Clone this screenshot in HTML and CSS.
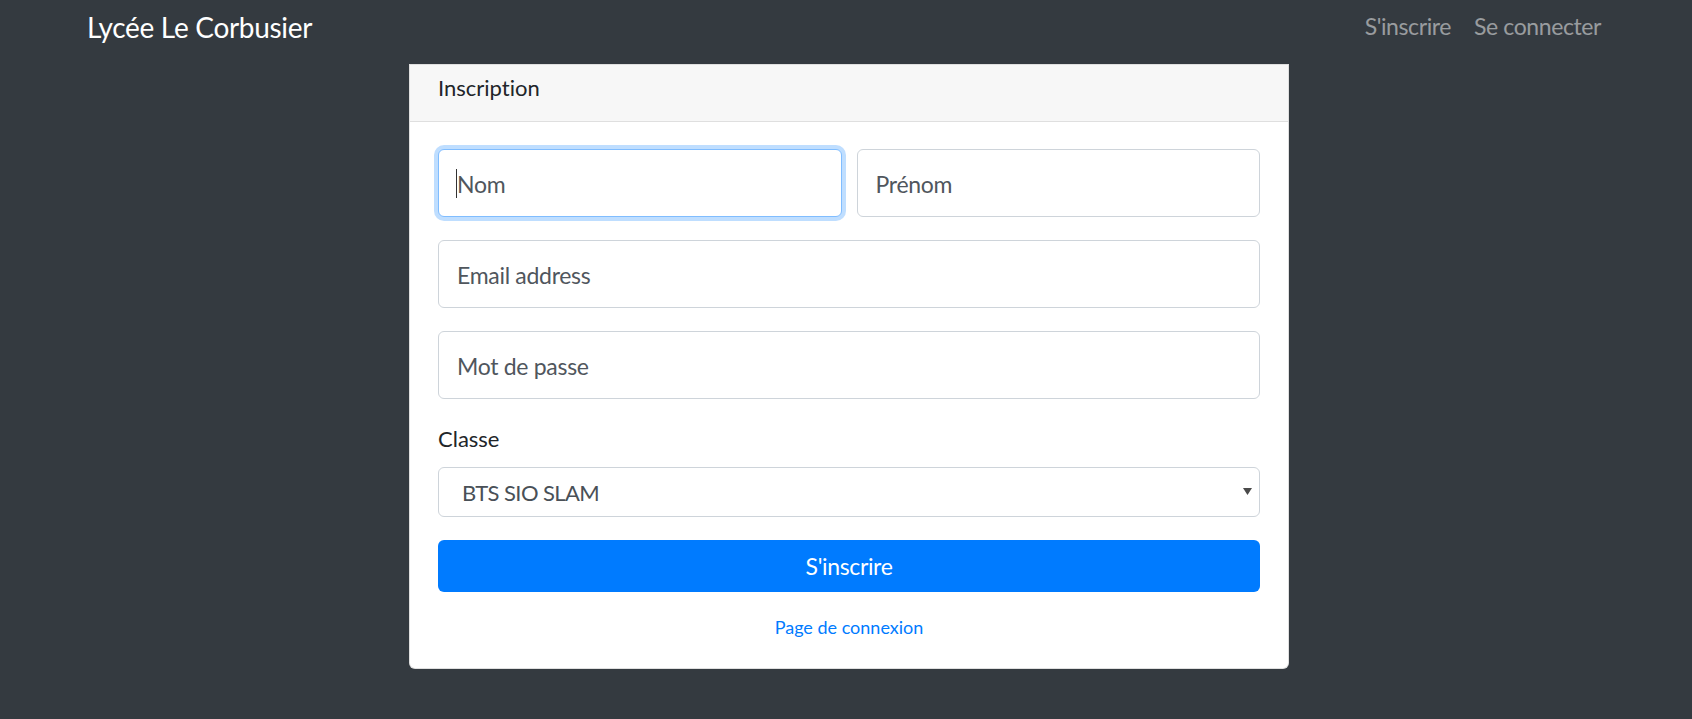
FILE: index.html
```html
<!DOCTYPE html>
<html lang="fr">
<head>
<meta charset="utf-8">
<title>Inscription - Lycée Le Corbusier</title>
<link rel="stylesheet" href="styles.css">
</head>
<body>
<header class="navbar">
  <a class="brand" href="#">Lycée Le Corbusier</a>
  <nav class="nav">
    <a class="nav-link" href="#">S'inscrire</a>
    <a class="nav-link" href="#">Se connecter</a>
  </nav>
</header>
<main class="page">
  <section class="card">
    <div class="card-header">Inscription</div>
    <form class="card-body">
      <div class="row row-two">
        <div class="field-wrap">
          <input class="field is-focus" type="text" placeholder="Nom">
          <span class="caret"></span>
        </div>
        <input class="field" type="text" placeholder="Prénom">
      </div>
      <div class="row">
        <input class="field" type="email" placeholder="Email address">
      </div>
      <div class="row">
        <input class="field" type="password" placeholder="Mot de passe">
      </div>
      <div class="group">
        <label class="label">Classe</label>
        <div class="select-wrap">
          <select class="select"><option>BTS SIO SLAM</option></select>
          <svg class="select-arrow" width="9" height="7" viewBox="0 0 9 7"><path d="M0 0H9L4.5 7Z" fill="#4a4a4a"/></svg>
        </div>
      </div>
      <button class="btn" type="button">S'inscrire</button>
      <div class="footer-link"><a href="#">Page de connexion</a></div>
    </form>
  </section>
</main>
</body>
</html>
```
FILE: styles.css
```css
* { box-sizing: border-box; }

html, body {
  margin: 0;
  padding: 0;
}

body {
  background: #343a40;
  font-family: Lato, "Open Sans", sans-serif;
  font-variant-ligatures: none;
  min-height: 100vh;
}

.navbar {
  height: 64px;
  display: flex;
  justify-content: space-between;
  align-items: flex-start;
  padding: 0 91px 0 87px;
}

.brand {
  margin-top: 12px;
  font-size: 28px;
  letter-spacing: -0.3px;
  line-height: 30px;
  color: #fff;
  text-decoration: none;
}

.nav {
  display: flex;
  gap: 23px;
  margin-top: 14px;
}

.nav-link {
  font-size: 23px;
  letter-spacing: -0.4px;
  line-height: 24px;
  color: rgba(255, 255, 255, 0.5);
  text-decoration: none;
}

.page {
  padding-left: 409px;
}

.card {
  width: 880px;
  background: #fff;
  border: 1px solid rgba(0, 0, 0, 0.125);
  border-radius: 0 0 6px 6px;
}

.card-header {
  height: 57px;
  padding: 0 28px 10px;
  background: #f7f7f7;
  border-bottom: 1px solid #dfdfdf;
  font-size: 22px;
  line-height: 46px;
  color: #212529;
}

.card-body {
  padding: 27px 28px 28px;
  display: flex;
  flex-direction: column;
}

.row {
  margin-bottom: 23px;
}

.row-two {
  display: grid;
  grid-template-columns: 1fr 1fr;
  gap: 15px;
}

.field-wrap {
  position: relative;
}

.caret {
  position: absolute;
  left: 18px;
  top: 20px;
  width: 1px;
  height: 29px;
  background: #333;
}

.field {
  display: block;
  width: 100%;
  height: 68px;
  padding: 1px 18px 0;
  border: 1px solid #ced4da;
  border-radius: 6px;
  font-family: inherit;
  font-size: 23px;
  letter-spacing: -0.3px;
  color: #495057;
  background: #fff;
  outline: none;
  caret-color: #495057;
}

.field::placeholder {
  color: #50565d;
  opacity: 1;
}

.field.is-focus,
.field:focus {
  border-color: #80bdff;
  box-shadow: 0 0 0 4px rgba(0, 123, 255, 0.25);
}

.group {
  margin-top: 2px;
  margin-bottom: 23px;
}

.label {
  display: block;
  font-size: 22px;
  line-height: 30px;
  color: #212529;
  margin-bottom: 13px;
}

.select-wrap {
  position: relative;
}

.select {
  display: block;
  width: 100%;
  height: 50px;
  padding: 0 40px 0 23px;
  border: 1px solid #ced4da;
  border-radius: 6px;
  font-family: inherit;
  font-size: 22px;
  letter-spacing: -0.6px;
  color: #495057;
  background: #fff;
  appearance: none;
  -webkit-appearance: none;
  outline: none;
}

.select-arrow {
  position: absolute;
  right: 8px;
  top: 21px;
}

.btn {
  display: block;
  width: 100%;
  height: 52px;
  border: none;
  border-radius: 6px;
  background: #007bff;
  color: #fff;
  font-family: inherit;
  font-size: 23px;
  letter-spacing: -0.35px;
  line-height: 50px;
  padding: 0;
  cursor: pointer;
}

.footer-link {
  margin-top: 22px;
  text-align: center;
  font-size: 18px;
  line-height: 26px;
}

.footer-link a {
  color: #007bff;
  text-decoration: none;
}
```
